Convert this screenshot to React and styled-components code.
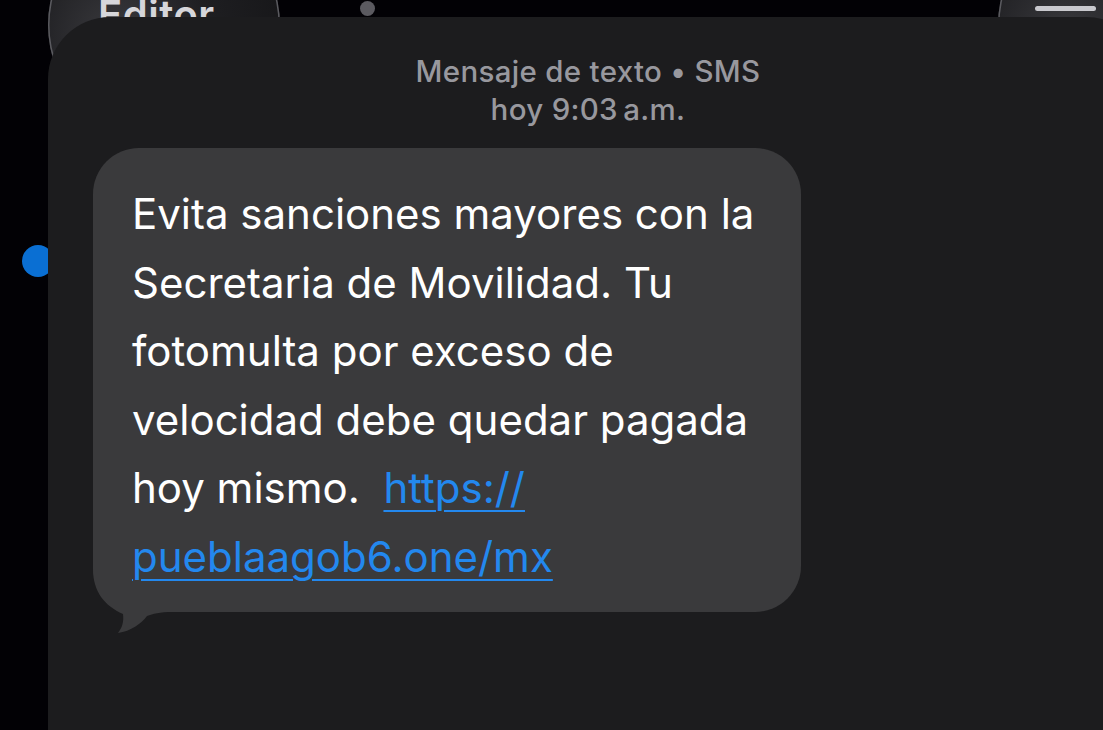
import React from "react";
import styled, { createGlobalStyle } from "styled-components";

const Global = createGlobalStyle`
  html, body {
    margin: 0;
    padding: 0;
    background: #020105;
    overflow: hidden;
  }
  body {
    font-family: Inter, "Noto Sans", sans-serif;
    -webkit-font-smoothing: antialiased;
  }
`;

const Screen = styled.div`
  position: relative;
  width: 1103px;
  height: 730px;
  overflow: hidden;
  background: #020105;
`;

/* the list screen that peeks out behind the sheet */
const Backdrop = styled.div`
  display: flex;
  flex-direction: column;
`;

const TopBar = styled.div`
  display: flex;
  align-items: flex-start;
  margin-top: -91px;
  padding-left: 48px;
`;

const GlassButton = styled.div`
  flex-shrink: 0;
  width: 232px;
  height: 232px;
  box-sizing: border-box;
  border-radius: 50%;
  background: radial-gradient(circle at 30% 55%, #3a3a3e 0%, #1e1e21 45%, #141416 100%);
  box-shadow: inset 0 0 0 1.5px #5a5a5f;
  display: flex;
  flex-direction: column;
  align-items: flex-start;
  padding: ${(p) => (p.$right ? "97px 0 0 37px" : "82px 0 0 50px")};
  margin-left: ${(p) => (p.$right ? "auto" : "0")};
  margin-right: ${(p) => (p.$right ? "-127px" : "0")};
`;

const BackTitle = styled.span`
  font-size: 40px;
  line-height: 48px;
  font-weight: 600;
  color: #d6d6da;
  letter-spacing: 0.5px;
`;

const BackDot = styled.span`
  flex-shrink: 0;
  margin: 92px 0 0 80px;
  width: 15px;
  height: 15px;
  border-radius: 50%;
  background: #5b5a60;
`;

const Menu = styled.div`
  display: flex;
  flex-direction: column;
  align-items: flex-end;
  gap: 10px;
  width: 61px;
`;

const MenuLine = styled.span`
  width: ${(p) => p.$width}px;
  height: 5px;
  border-radius: 3px;
  background: #c9c9ce;
  margin-right: ${(p) => p.$inset}px;
`;

const ListRow = styled.div`
  display: flex;
  align-items: center;
  padding: 104px 0 0 22px;
`;

const UnreadDot = styled.span`
  width: 32px;
  height: 32px;
  border-radius: 50%;
  background: #0a6fd3;
`;

/* the message sheet lying over the list */
const Sheet = styled.section`
  position: absolute;
  top: 17px;
  left: 48px;
  width: 1100px;
  height: 760px;
  background: #1c1c1e;
  border-radius: 62px 62px 0 0;
  display: flex;
  flex-direction: column;
`;

const Header = styled.header`
  width: 1080px;
  padding-top: 35px;
  text-align: center;
  color: #98989e;
  font-size: 29.5px;
  line-height: 38px;
  font-weight: 500;
  letter-spacing: 0.3px;
`;

const Thread = styled.div`
  margin-top: 20px;
  padding-left: 45px;
  display: flex;
  flex-direction: column;
  align-items: flex-start;
`;

const Bubble = styled.div`
  position: relative;
  z-index: 0;
  width: 708px;
  box-sizing: border-box;
  padding: 32px 20px 21px 39px;
  background: #3a3a3c;
  border-radius: 46px;
  color: #ffffff;
  font-size: 42px;
  line-height: 68.5px;
  font-weight: 400;
`;

const Tail = styled.svg`
  position: absolute;
  z-index: -1;
  left: 0;
  bottom: -22px;
  width: 80px;
  height: 80px;
`;

const Link = styled.a`
  color: #2388ee;
  text-decoration: underline;
  text-decoration-thickness: 2px;
  text-underline-offset: 7px;
`;

export default function App() {
  return (
    <Screen>
      <Global />
      <Backdrop>
        <TopBar>
          <GlassButton>
            <BackTitle>Editor</BackTitle>
          </GlassButton>
          <BackDot />
          <GlassButton $right>
            <Menu>
              <MenuLine $width={61} $inset={0} />
              <MenuLine $width={27} $inset={3} />
            </Menu>
          </GlassButton>
        </TopBar>
        <ListRow>
          <UnreadDot />
        </ListRow>
      </Backdrop>
      <Sheet>
        <Header>
          <div>Mensaje de texto • SMS</div>
          <div>hoy 9:03&#8201;a.m.</div>
        </Header>
        <Thread>
          <Bubble>
            <Tail viewBox="0 0 80 80">
              <path
                d="M0 0 L0 15 C0 38, 12 52, 30 60 C31 68, 29 74, 25 79 C38 77, 48 70, 54 62 C60 60, 66 58, 80 58 L80 0 Z"
                fill="#3a3a3c"
              />
            </Tail>
            Evita sanciones mayores con la Secretaria de Movilidad. Tu
            fotomulta por exceso de velocidad debe quedar pagada hoy
            mismo.{"\u00a0\u00a0"}
            <Link>https://</Link>
            <br />
            <Link>pueblaagob6.one/mx</Link>
          </Bubble>
        </Thread>
      </Sheet>
    </Screen>
  );
}
